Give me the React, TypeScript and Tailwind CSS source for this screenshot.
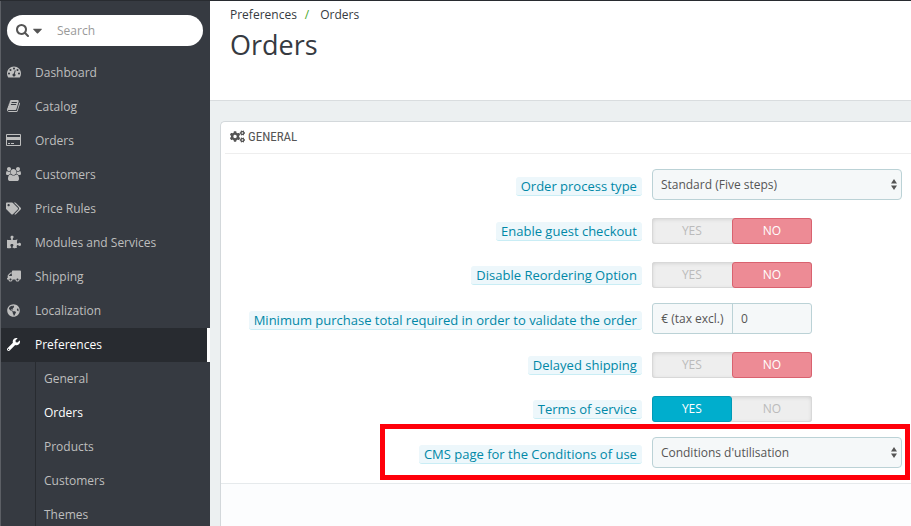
import { useState, type ReactNode } from "react";
import {
    FaCaretDown,
    FaCogs,
    FaGlobeAmericas,
    FaPuzzlePiece,
    FaTags,
    FaTruck,
    FaWrench,
} from "react-icons/fa";

const SearchIcon = () => (
    <svg viewBox="64 128 1664 1664" className="w-[13px] h-[13px]" fill="currentColor" aria-hidden="true">
        <path d="M1216 832q0-185-131.5-316.5t-316.5-131.5-316.5 131.5-131.5 316.5 131.5 316.5 316.5 131.5 316.5-131.5 131.5-316.5zm512 832q0 52-38 90t-90 38q-54 0-90-38l-343-342q-179 124-399 124-143 0-273.5-55.5t-225-150-150-225-55.5-273.5 55.5-273.5 150-225 225-150 273.5-55.5 273.5 55.5 225 150 150 225 55.5 273.5q0 220-124 399l343 343q37 37 37 90z" />
    </svg>
);

const DashboardIcon = () => (
    <svg viewBox="0 256 1792 1408" className="w-[14px] h-[12px]" fill="currentColor" aria-hidden="true">
        <path d="M384 1152q0-53-37.5-90.5t-90.5-37.5-90.5 37.5-37.5 90.5 37.5 90.5 90.5 37.5 90.5-37.5 37.5-90.5zm192-448q0-53-37.5-90.5t-90.5-37.5-90.5 37.5-37.5 90.5 37.5 90.5 90.5 37.5 90.5-37.5 37.5-90.5zm428 481l101-382q6-26-7.5-48.5t-38.5-29.5-48 6.5-30 39.5l-101 382q-60 5-107 43.5t-63 98.5q-20 77 20 146t117 89 146-20 89-117q16-60-6-117t-72-91zm660-33q0-53-37.5-90.5t-90.5-37.5-90.5 37.5-37.5 90.5 37.5 90.5 90.5 37.5 90.5-37.5 37.5-90.5zm-640-640q0-53-37.5-90.5t-90.5-37.5-90.5 37.5-37.5 90.5 37.5 90.5 90.5 37.5 90.5-37.5 37.5-90.5zm448 192q0-53-37.5-90.5t-90.5-37.5-90.5 37.5-37.5 90.5 37.5 90.5 90.5 37.5 90.5-37.5 37.5-90.5zm320 448q0 261-141 483-19 29-54 29h-1402q-35 0-54-29-141-221-141-483 0-182 71-348t191-286 286-191 348-71 348 71 286 191 191 286 71 348z" />
    </svg>
);

const BookIcon = () => (
    <svg viewBox="64 128 1664 1536" className="w-[13px] h-[12px]" fill="currentColor" aria-hidden="true">
        <path d="M1703 478q40 57 18 129l-275 906q-19 64-76.5 107.5t-122.5 43.5h-923q-77 0-148.5-53.5t-99.5-131.5q-24-67-2-127 0-4 3-27t4-37q1-8-3-21.5t-3-19.5q2-11 8-21t16.5-23.5 16.5-23.5q23-38 45-91.5t30-91.5q3-10 .5-30t-.5-28q3-11 17-28t17-23q21-36 42-92t25-90q1-9-2.5-32t.5-28q4-13 22-30.5t22-22.5q19-26 42.5-84.5t27.5-96.5q1-8-3-25.5t-2-26.5q2-8 9-18t18-23 17-21q8-12 16.5-30.5t15-35 16-36 19.5-32 26.5-23.5 36-11.5 47.5 5.5l-1 3q38-9 51-9h761q74 0 114 56t18 130l-274 906q-36 119-71.5 153.5t-128.5 34.5h-869q-27 0-38 15-11 16-1 43 24 70 144 70h923q29 0 56-15.5t35-41.5l300-987q7-22 5-57 38 15 59 43zm-1064 2q-4 13 2 22.5t20 9.5h608q13 0 25.5-9.5t16.5-22.5l21-64q4-13-2-22.5t-20-9.5h-608q-13 0-25.5 9.5t-16.5 22.5zm-83 256q-4 13 2 22.5t20 9.5h608q13 0 25.5-9.5t16.5-22.5l21-64q4-13-2-22.5t-20-9.5h-608q-13 0-25.5 9.5t-16.5 22.5z" />
    </svg>
);

const CardIcon = () => (
    <svg viewBox="0 0 15 12" className="w-[15px] h-[12px]" fill="currentColor" aria-hidden="true">
        <path
            fillRule="evenodd"
            d="M1 0h13q1 0 1 1v10q0 1-1 1H1q-1 0-1-1V1q0-1 1-1zM1 1v2h13V1zM1 6v5h13V6z"
        />
        <path d="M2 9h2v1H2zM5 9h3v1H5z" />
    </svg>
);

const UsersIcon = () => (
    <svg viewBox="64 0 1920 1792" className="w-[15px] h-[14px]" fill="currentColor" aria-hidden="true">
        <path d="M657 896q-162 5-265 128h-134q-82 0-138-40.5t-56-118.5q0-353 124-353 6 0 43.5 21t97.5 42.5 119 21.5q67 0 133-23-5 37-5 66 0 139 81 256zm1071 637q0 120-73 189.5t-194 69.5h-874q-121 0-194-69.5t-73-189.5q0-53 3.5-103.5t14-109 26.5-108.5 43-97.5 62-81 85.5-53.5 111.5-20q10 0 43 21.5t73 48 107 48 135 21.5 135-21.5 107-48 73-48 43-21.5q61 0 111.5 20t85.5 53.5 62 81 43 97.5 26.5 108.5 14 109 3.5 103.5zm-1024-1277q0 106-75 181t-181 75-181-75-75-181 75-181 181-75 181 75 75 181zm704 384q0 159-112.5 271.5t-271.5 112.5-271.5-112.5-112.5-271.5 112.5-271.5 271.5-112.5 271.5 112.5 112.5 271.5zm576 225q0 78-56 118.5t-138 40.5h-134q-103-123-265-128 81-117 81-256 0-29-5-66 66 23 133 23 59 0 119-21.5t97.5-42.5 43.5-21q124 0 124 353zm-128-609q0 106-75 181t-181 75-181-75-75-181 75-181 181-75 181 75 75 181z" />
    </svg>
);

const menuItems = [
    { name: "Dashboard", icon: <DashboardIcon /> },
    { name: "Catalog", icon: <BookIcon /> },
    { name: "Orders", icon: <CardIcon /> },
    { name: "Customers", icon: <UsersIcon /> },
    { name: "Price Rules", icon: <FaTags size={15} /> },
    { name: "Modules and Services", icon: <FaPuzzlePiece size={14} /> },
    { name: "Shipping", icon: <FaTruck size={14} className="-scale-x-100" /> },
    { name: "Localization", icon: <FaGlobeAmericas size={13} /> },
    { name: "Preferences", icon: <FaWrench size={13} />, active: true },
];

const subItems = ["General", "Orders", "Products", "Customers", "Themes"];

function Sidebar() {
    return (
        <aside className="w-[210px] shrink-0 bg-[#363a41] border-l border-[#5c5f65] text-xs text-[#bebebe]">
            <form className="ml-1.5 mr-[7px] mt-3.5 mb-2.5 h-[31px] flex items-center rounded-full bg-white pl-[9px]">
                <button type="button" aria-label="Search in" className="flex items-center gap-px text-[#555]">
                    <SearchIcon />
                    <FaCaretDown size={15} />
                </button>
                <input
                    type="search"
                    aria-label="Search"
                    placeholder="Search"
                    className="ml-3 min-w-0 flex-1 bg-transparent text-[#555] placeholder:text-[#999] outline-none"
                />
            </form>

            <nav>
                <ul>
                    {menuItems.map((item) => (
                        <li key={item.name}>
                            <a
                                href="#"
                                className={
                                    item.active
                                        ? "flex h-[34px] items-center bg-[#282b30] pl-[5px] text-white font-medium border-r-3 border-white"
                                        : "flex h-[34px] items-center pl-[5px] hover:text-white"
                                }
                            >
                                <span className="flex w-[15px] justify-center mr-3.5 pb-0.5">{item.icon}</span>
                                {item.name}
                            </a>
                        </li>
                    ))}
                </ul>
                <ul className="ml-[34px] border-l border-[#282b30]">
                    {subItems.map((name) => (
                        <li key={name}>
                            <a
                                href="#"
                                className={
                                    name === "Orders"
                                        ? "flex h-[34px] items-center pl-2 text-white font-medium"
                                        : "flex h-[34px] items-center pl-2 hover:text-white"
                                }
                            >
                                {name}
                            </a>
                        </li>
                    ))}
                </ul>
            </nav>
        </aside>
    );
}

function Row({ id, label, highlight, children }: { id: string; label: string; highlight?: boolean; children: ReactNode }) {
    return (
        <div className="relative flex items-center gap-2.5">
            <div className="flex w-[61%] shrink-0 justify-end pt-[3px]">
                <label
                    id={`${id}-label`}
                    htmlFor={id}
                    className="whitespace-nowrap rounded-[3px] border-b border-[#c9edf5] bg-[#edf7fb] px-[5px] text-[13px] leading-[18px] text-[#0088a7]"
                >
                    {label}
                </label>
            </div>
            {children}
            {highlight && (
                <div className="pointer-events-none absolute -top-[13px] -bottom-3 left-[23%] right-px border-5 border-[#ff000a]" />
            )}
        </div>
    );
}

function Select({ id, options }: { id: string; options: string[] }) {
    return (
        <div className="relative mr-[9px] flex-1">
            <select
                id={id}
                className="block h-[31px] w-full appearance-none rounded-[4px] border border-[#bbd2d6] bg-[#f5f8f9] px-2 text-xs text-[#555]"
            >
                {options.map((option) => (
                    <option key={option}>{option}</option>
                ))}
            </select>
            <svg
                viewBox="0 0 6 11"
                className="pointer-events-none absolute right-[5px] top-[10px] h-[11px] w-[6px]"
                fill="#555"
                aria-hidden="true"
            >
                <path d="M3 0l3 4.500H0zM3 11l3-4.500H0z" />
            </svg>
        </div>
    );
}

function Switch({ id, initial }: { id: string; initial: boolean }) {
    const [on, setOn] = useState(initial);

    return (
        <div
            role="radiogroup"
            aria-labelledby={`${id}-label`}
            className="mt-[3px] flex h-[26px] w-40 rounded-[3px] bg-[#eee] text-xs text-[#bbb] shadow-[inset_0_0_0_1px_#d8d8d8,inset_0_1px_4px_rgba(0,0,0,0.15)]"
        >
            <label
                className={
                    on
                        ? "flex w-1/2 items-center justify-center rounded-[3px] border border-[#009ab7] bg-[#00aecd] text-white font-medium"
                        : "flex w-1/2 items-center justify-center"
                }
            >
                <input id={id} type="radio" name={id} checked={on} onChange={() => setOn(true)} className="sr-only" />
                YES
            </label>
            <label
                className={
                    on
                        ? "flex w-1/2 items-center justify-center"
                        : "flex w-1/2 items-center justify-center rounded-[3px] border border-[#d9626f] bg-[#ed8b95] text-white font-medium"
                }
            >
                <input type="radio" name={id} checked={!on} onChange={() => setOn(false)} className="sr-only" />
                NO
            </label>
        </div>
    );
}

export default function App() {
    return (
        <div className="flex min-h-screen border-t border-[#282b30] bg-[#ecf0f1] font-['Open_Sans','Noto_Sans',sans-serif]">
            <Sidebar />

            <main className="flex min-w-0 flex-1 flex-col">
                <header className="border-b border-[#d9dddf] bg-white px-5 pt-1 pb-[35px] text-[#363a41]">
                    <nav aria-label="Breadcrumb" className="flex text-xs leading-5">
                        <a href="#">Preferences</a>
                        <span className="ml-2 mr-[11px] text-[#4aa92c]">/</span>
                        <a href="#">Orders</a>
                    </nav>
                    <h1 className="text-[27px] leading-10">Orders</h1>
                </header>

                {/* General panel */}
                <section className="mt-5 ml-2.5 flex flex-1 flex-col rounded-tl-[5px] border-t border-l border-[#d3d8db] bg-white">
                    <h2 className="ml-1 flex h-8 items-center gap-[3px] border-b border-[#eee] pl-[5px] pb-0.5 font-['Ubuntu_Condensed','Roboto_Condensed','Liberation_Sans_Narrow',sans-serif] text-[13px] text-[#555]">
                        <FaCogs size={15} />
                        GENERAL
                    </h2>

                    <form className="mt-[15px] mb-[15px] flex flex-col gap-[15px]">
                        <Row id="process-type" label="Order process type">
                            <Select id="process-type" options={["Standard (Five steps)", "One-page checkout"]} />
                        </Row>
                        <Row id="guest" label="Enable guest checkout">
                            <Switch id="guest" initial={false} />
                        </Row>
                        <Row id="reorder" label="Disable Reordering Option">
                            <Switch id="reorder" initial={false} />
                        </Row>
                        <Row id="minimum" label="Minimum purchase total required in order to validate the order">
                            <div className="flex h-[31px] w-40 overflow-hidden rounded-[3px] border border-[#bbd2d6] bg-[#f5f8f9] text-xs text-[#555]">
                                <span className="flex w-20 items-center justify-center border-r border-[#bbd2d6] whitespace-nowrap">
                                    € (tax excl.)
                                </span>
                                <input id="minimum" type="text" defaultValue="0" className="min-w-0 flex-1 px-2 outline-none" />
                            </div>
                        </Row>
                        <Row id="delayed" label="Delayed shipping">
                            <Switch id="delayed" initial={false} />
                        </Row>
                        <Row id="terms" label="Terms of service">
                            <Switch id="terms" initial={true} />
                        </Row>
                        <Row id="cms" label="CMS page for the Conditions of use" highlight>
                            <Select id="cms" options={["Conditions d'utilisation", "None"]} />
                        </Row>
                    </form>

                    <footer className="flex-1 border-t border-[#e6eaec] bg-[#fcfdfe]" />
                </section>
            </main>
        </div>
    );
}
